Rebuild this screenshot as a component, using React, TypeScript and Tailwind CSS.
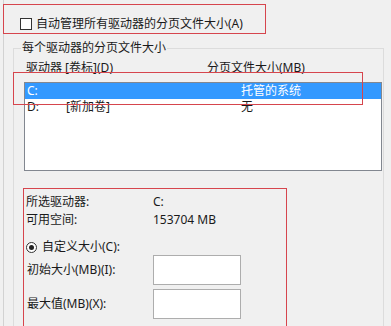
import React from "react";

const font = { fontFamily: '"Noto Sans", "Noto Sans CJK SC", sans-serif' };

export default function App() {
  return (
    <div
      className="relative w-[391px] h-[326px] overflow-hidden bg-[#f0f0f0] text-[12px] leading-[16px] text-[#1a1a1a]"
      style={font}
    >
      <div className="absolute left-[3px] top-0 bottom-0 w-px bg-[#d2d2d2]" />
      <div className="relative pt-[4px] pl-[3px]">
        {/* top checkbox, annotated */}
        <div className="w-[263px] h-[30px] border border-[#d6454d] flex items-center pt-[10px] pl-[16px]">
          <div className="w-[12px] h-[12px] border border-[#333] bg-white shrink-0" />
          <span className="ml-[4px] whitespace-nowrap">自动管理所有驱动器的分页文件大小(A)</span>
        </div>

        {/* group box */}
        <fieldset className="relative mt-[6px] ml-[10px] w-[371px] h-[300px] border border-[#dcdcdc] pl-[10px] pr-[1px]">
          <legend className="-ml-[3px] px-[1px] leading-[16px]">每个驱动器的分页文件大小</legend>
          <div className="flex pt-[4px] h-[20px] whitespace-nowrap">
            <span className="ml-[2px] w-[181px]">驱动器 [卷标](D)</span>
            <span>分页文件大小(MB)</span>
          </div>
          <div className="mt-[6px] h-[89px] border border-[#828790] bg-white">
            <div className="flex h-[16px] items-center bg-[#3399ff] text-white whitespace-nowrap">
              <span className="ml-[2px] w-[214px]">C:</span>
              <span>托管的系统</span>
            </div>
            <div className="flex h-[16px] items-center whitespace-nowrap">
              <span className="ml-[2px] w-[39px]">D:</span>
              <span className="w-[175px]">[新加卷]</span>
              <span>无</span>
            </div>
          </div>

          {/* selected drive section, annotated */}
          <div className="mt-[17px] -ml-[1px] w-[264px] h-[160px] border border-[#d6454d] pt-[4px] pl-[2px]">
            <div className="flex h-[18px] items-center whitespace-nowrap">
              <span className="w-[127px]">所选驱动器:</span>
              <span>C:</span>
            </div>
            <div className="flex h-[18px] items-center whitespace-nowrap">
              <span className="w-[127px]">可用空间:</span>
              <span>153704 MB</span>
            </div>
            <div className="mt-[10px] flex h-[16px] items-center whitespace-nowrap">
              <div className="w-[11px] h-[11px] rounded-full border border-[#333] bg-white flex items-center justify-center">
                <div className="w-[5px] h-[5px] rounded-full bg-[#222]" />
              </div>
              <span className="ml-[5px]">自定义大小(C):</span>
            </div>
            <div className="flex h-[30px] items-center whitespace-nowrap">
              <span className="ml-[1px] w-[126px]">初始大小(MB)(I):</span>
              <div className="w-[88px] h-[30px] border border-[#adadad] bg-white" />
            </div>
            <div className="mt-[4px] flex h-[30px] items-center whitespace-nowrap">
              <span className="ml-[1px] w-[126px]">最大值(MB)(X):</span>
              <div className="w-[88px] h-[30px] border border-[#adadad] bg-white" />
            </div>
          </div>
        </fieldset>

        {/* annotation over list header / first row */}
        <div className="absolute left-[13px] top-[72px] w-[350px] h-[33px] border border-[#d6454d]" />
      </div>
    </div>
  );
}
